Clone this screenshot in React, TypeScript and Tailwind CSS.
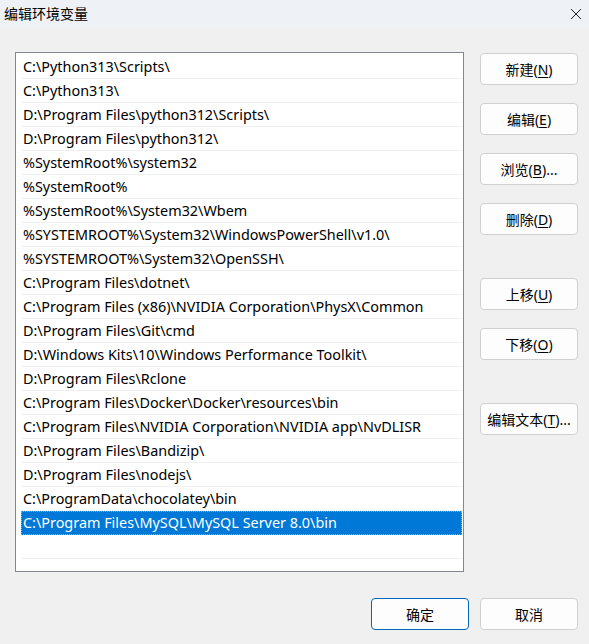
const paths = [
  'C:\\Python313\\Scripts\\',
  'C:\\Python313\\',
  'D:\\Program Files\\python312\\Scripts\\',
  'D:\\Program Files\\python312\\',
  '%SystemRoot%\\system32',
  '%SystemRoot%',
  '%SystemRoot%\\System32\\Wbem',
  '%SYSTEMROOT%\\System32\\WindowsPowerShell\\v1.0\\',
  '%SYSTEMROOT%\\System32\\OpenSSH\\',
  'C:\\Program Files\\dotnet\\',
  'C:\\Program Files (x86)\\NVIDIA Corporation\\PhysX\\Common',
  'D:\\Program Files\\Git\\cmd',
  'D:\\Windows Kits\\10\\Windows Performance Toolkit\\',
  'D:\\Program Files\\Rclone',
  'C:\\Program Files\\Docker\\Docker\\resources\\bin',
  'C:\\Program Files\\NVIDIA Corporation\\NVIDIA app\\NvDLISR',
  'D:\\Program Files\\Bandizip\\',
  'D:\\Program Files\\nodejs\\',
  'C:\\ProgramData\\chocolatey\\bin',
  'C:\\Program Files\\MySQL\\MySQL Server 8.0\\bin',
];

const font = { fontFamily: '"Noto Sans", "Noto Sans CJK SC", sans-serif' };

function Btn({ label, keyChar, tail = '', primary = false }: { label: string; keyChar?: string; tail?: string; primary?: boolean }) {
  return (
    <button
      className={`w-[98px] h-[32px] rounded-[4px] bg-[#fdfdfd] text-[14px] text-black flex items-center justify-center ${
        primary ? 'border border-[#0067c0]' : 'border border-[#d0d0d0]'
      }`}
    >
      {label}
      {keyChar && (
        <>
          (<span className="underline underline-offset-2">{keyChar}</span>){tail}
        </>
      )}
    </button>
  );
}

export default function App() {
  return (
    <div className="w-[589px] h-[644px] bg-[#f0f0f0] flex flex-col" style={font}>
      <div className="h-[27px] bg-[#eef2f6] flex items-center justify-between pl-[4px] pr-[6px]">
        <span className="text-[14px] text-black leading-none">编辑环境变量</span>
        <svg width="12" height="12" viewBox="0 0 12 12" className="mr-[1px]">
          <path d="M1 1L11 11M11 1L1 11" stroke="#222" strokeWidth="1" />
        </svg>
      </div>

      <div className="flex pl-[15px] pt-[25px]">
        <div className="w-[449px] h-[520px] border border-[#828790] bg-white pt-[2px] pl-[5px] pr-[1px] text-[14.4px]">
          {paths.map((p, i) =>
            i === paths.length - 1 ? (
              <div
                key={i}
                className="h-[24px] bg-[#0078d7] text-white flex items-center pl-[1px] border border-dotted border-[#f59a36]"
              >
                {p}
              </div>
            ) : (
              <div key={i} className="h-[24px] text-black flex items-center pl-[2px] border-b border-[#f0f0f0]">
                {p}
              </div>
            )
          )}
          <div className="h-[24px] border-b border-[#f0f0f0]" />
        </div>

        <div className="flex flex-col ml-[16px] mt-[1px] gap-[18px]">
          <Btn label="新建" keyChar="N" />
          <Btn label="编辑" keyChar="E" />
          <Btn label="浏览" keyChar="B" tail="..." />
          <Btn label="删除" keyChar="D" />
          <div className="h-[7px]" />
          <Btn label="上移" keyChar="U" />
          <Btn label="下移" keyChar="O" />
          <div className="h-[7px]" />
          <Btn label="编辑文本" keyChar="T" tail="..." />
        </div>
      </div>

      <div className="flex justify-end gap-[11px] pr-[11px] mt-[26px]">
        <Btn label="确定" primary />
        <Btn label="取消" />
      </div>
    </div>
  );
}
